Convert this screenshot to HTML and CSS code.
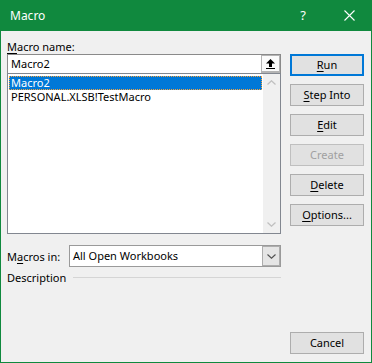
FILE: index.html
```html
<!DOCTYPE html>
<html>
<head>
<meta charset="utf-8">
<link rel="stylesheet" href="styles.css">
</head>
<body>
<div class="window">
  <div class="titlebar">
    <span class="title">Macro</span>
    <span class="tbtn help">?</span>
    <span class="tbtn close"><svg width="11" height="11" viewBox="0 0 11 11"><path d="M0.5 0.5 L10.5 10.5 M10.5 0.5 L0.5 10.5" stroke="#ffffff" stroke-width="1.1" fill="none"/></svg></span>
  </div>
  <div class="body">
    <div class="left">
      <div class="label"><u>M</u>acro name:</div>
      <div class="namebox">
        <span class="nametext">Macro2</span>
        <span class="collapse"><svg width="9" height="10" viewBox="0 0 9 10"><polygon points="4.5,0 9,4.5 0,4.5" fill="#000"/><rect x="3" y="4" width="3" height="4" fill="#000"/><rect x="0" y="9" width="9" height="1" fill="#000"/></svg></span>
      </div>
      <div class="listbox">
        <div class="items">
          <div class="item selected">Macro2</div>
          <div class="item">PERSONAL.XLSB!TestMacro</div>
        </div>
        <div class="vscroll">
          <span class="sarrow"><svg width="9" height="5" viewBox="0 0 9 5"><polyline points="0.5,4.5 4.5,0.8 8.5,4.5" fill="none" stroke="#c0c0c0" stroke-width="1.3"/></svg></span>
          <span class="sarrow"><svg width="9" height="5" viewBox="0 0 9 5"><polyline points="0.5,0.5 4.5,4.2 8.5,0.5" fill="none" stroke="#c0c0c0" stroke-width="1.3"/></svg></span>
        </div>
      </div>
      <div class="macrosin">
        <span class="inlabel">M<u>a</u>cros in:</span>
        <div class="combo">
          <span class="combotext">All Open Workbooks</span>
          <span class="dropbtn"><svg width="9" height="5" viewBox="0 0 9 5"><polyline points="0.5,0.5 4.5,4.2 8.5,0.5" fill="none" stroke="#505050" stroke-width="1.1"/></svg></span>
        </div>
      </div>
      <div class="desc">
        <span class="desclabel">Description</span>
        <span class="rule"></span>
      </div>
    </div>
    <div class="right">
      <div class="btn default"><u>R</u>un</div>
      <div class="btn"><u>S</u>tep Into</div>
      <div class="btn"><u>E</u>dit</div>
      <div class="btn disabled">Create</div>
      <div class="btn"><u>D</u>elete</div>
      <div class="btn"><u>O</u>ptions...</div>
      <div class="btn cancel">Cancel</div>
    </div>
  </div>
</div>
</body>
</html>
```
FILE: styles.css
```css
html, body {
  margin: 0;
  padding: 0;
}
body {
  width: 372px;
  height: 363px;
  overflow: hidden;
  font-family: "Noto Sans", "Open Sans", sans-serif;
  font-size: 11px;
  color: #000;
}
.window {
  width: 372px;
  height: 363px;
  display: flex;
  flex-direction: column;
}
.titlebar {
  height: 31px;
  flex: none;
  background: #10893e;
  color: #fff;
  display: flex;
  align-items: center;
}
.title {
  flex: 1;
  padding-left: 10px;
  font-size: 12px;
  line-height: 31px;
}
.tbtn {
  width: 46px;
  height: 31px;
  display: flex;
  align-items: center;
  justify-content: center;
}
.help {
  font-size: 13px;
  padding-bottom: 1px;
  box-sizing: border-box;
}
.body {
  flex: 1;
  background: #f0f0f0;
  border: 1px solid #10893e;
  border-top: none;
  display: flex;
  padding: 8px 7px 8px 6px;
  gap: 9px;
}
.left {
  width: 274px;
  display: flex;
  flex-direction: column;
}
.label {
  height: 15px;
  line-height: 15px;
}
u {
  text-decoration: underline;
  text-underline-offset: 2px;
}
.namebox {
  height: 19px;
  box-sizing: border-box;
  border: 1px solid #8a8a8a;
  border-bottom: none;
  background: #fff;
  display: flex;
  align-items: stretch;
}
.nametext {
  flex: 1;
  padding-left: 3px;
  line-height: 18px;
}
.collapse {
  width: 19px;
  box-sizing: border-box;
  border: 1px solid #b4b4b4;
  border-bottom: 2px solid #b4b4b4;
  background: #fbfbfb;
  display: flex;
  align-items: center;
  justify-content: center;
}
.listbox {
  height: 161px;
  box-sizing: border-box;
  border: 1px solid #828790;
  background: #fff;
  display: flex;
}
.items {
  flex: 1;
  padding: 2px 1px 0 1px;
}
.item {
  height: 14px;
  line-height: 14px;
  padding-left: 2px;
  white-space: nowrap;
}
.item.selected {
  background: #0078d7;
  color: #fff;
  outline: 1px dotted #f5a23c;
  outline-offset: -1px;
}
.vscroll {
  width: 17px;
  background: #f0f0f0;
  display: flex;
  flex-direction: column;
  justify-content: space-between;
}
.sarrow {
  height: 17px;
  display: flex;
  align-items: center;
  justify-content: center;
}
.macrosin {
  margin-top: 11px;
  height: 22px;
  display: flex;
  align-items: center;
}
.inlabel {
  width: 62px;
  flex: none;
}
.combo {
  width: 212px;
  height: 22px;
  box-sizing: border-box;
  border: 1px solid #9a9a9a;
  background: #fff;
  display: flex;
}
.combotext {
  flex: 1;
  padding-left: 3px;
  line-height: 20px;
}
.dropbtn {
  width: 18px;
  box-sizing: border-box;
  border: 1px solid #adadad;
  background: #e5e5e5;
  display: flex;
  align-items: center;
  justify-content: center;
}
.desc {
  margin-top: 2px;
  height: 16px;
  display: flex;
  align-items: center;
  gap: 7px;
}
.rule {
  flex: 1;
  height: 1px;
  background: #d5d5d5;
}
.right {
  width: 74px;
  padding-top: 15px;
  display: flex;
  flex-direction: column;
  gap: 8px;
}
.btn {
  height: 22px;
  box-sizing: border-box;
  border: 1px solid #adadad;
  background: #e1e1e1;
  display: flex;
  align-items: center;
  justify-content: center;
  line-height: 14px;
}
.btn.default {
  border: 2px solid #0078d7;
}
.btn.disabled {
  border-color: #bfbfbf;
  color: #a0a0a0;
}
.btn.cancel {
  margin-top: auto;
}
```
